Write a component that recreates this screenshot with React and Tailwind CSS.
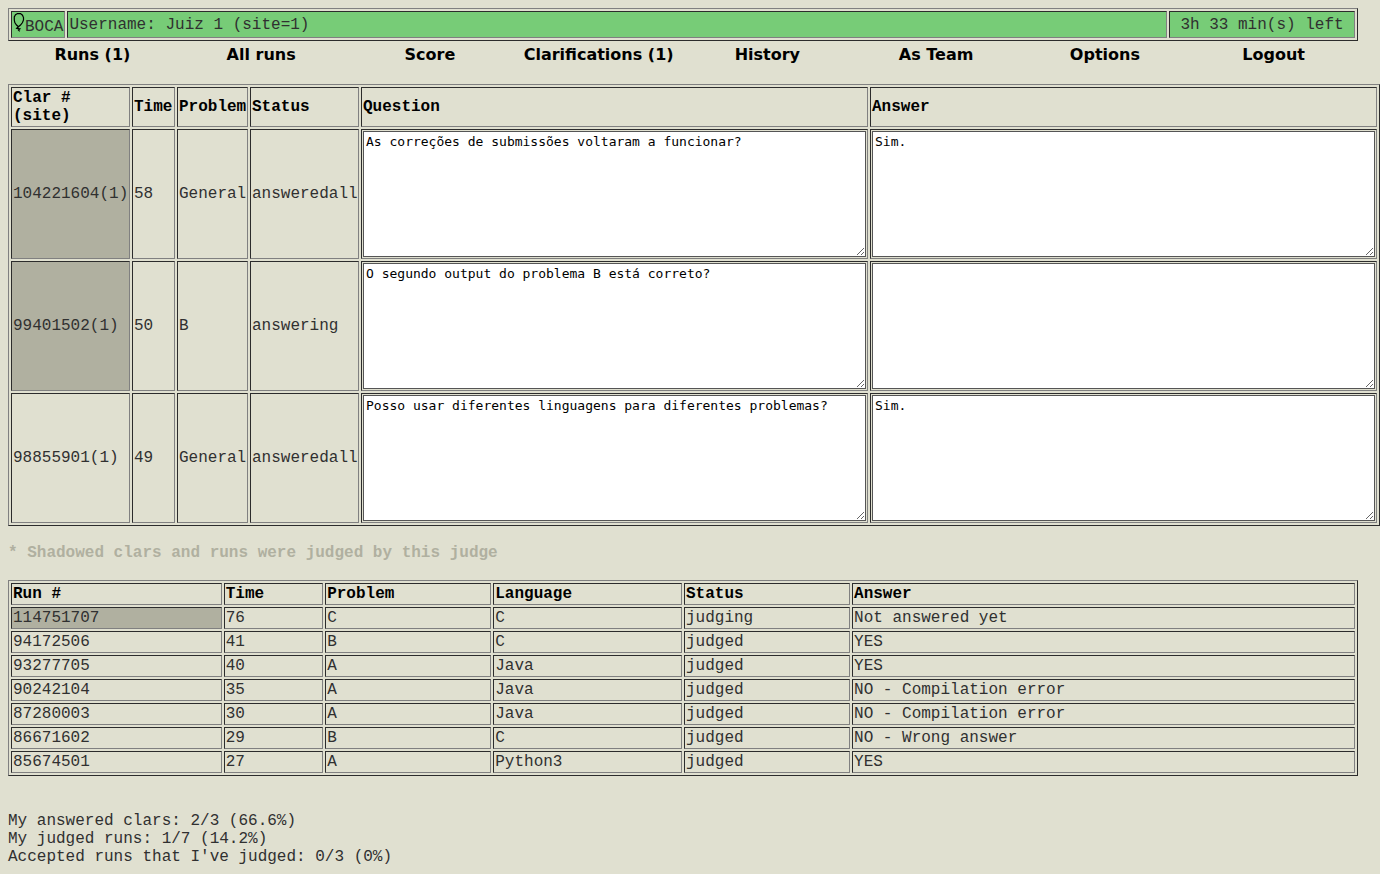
const OUTER =
  "border-separate border-spacing-[2px] border border-t-[#808080] border-l-[#808080] border-r-[#2c2c2c] border-b-[#2c2c2c]";
const CELL =
  "border border-t-[#2c2c2c] border-l-[#2c2c2c] border-r-[#808080] border-b-[#808080] p-px text-left";

const menu = [
  "Runs (1)",
  "All runs",
  "Score",
  "Clarifications (1)",
  "History",
  "As Team",
  "Options",
  "Logout",
];

const clars = [
  { id: "104221604", site: 1, time: 58, problem: "General", status: "answeredall", question: "As correções de submissões voltaram a funcionar?", answer: "Sim.", mine: true },
  { id: "99401502", site: 1, time: 50, problem: "B", status: "answering", question: "O segundo output do problema B está correto?", answer: "", mine: true },
  { id: "98855901", site: 1, time: 49, problem: "General", status: "answeredall", question: "Posso usar diferentes linguagens para diferentes problemas?", answer: "Sim.", mine: false },
];

const runs = [
  { id: "114751707", time: 76, problem: "C", language: "C", status: "judging", answer: "Not answered yet", mine: true },
  { id: "94172506", time: 41, problem: "B", language: "C", status: "judged", answer: "YES" },
  { id: "93277705", time: 40, problem: "A", language: "Java", status: "judged", answer: "YES" },
  { id: "90242104", time: 35, problem: "A", language: "Java", status: "judged", answer: "NO - Compilation error" },
  { id: "87280003", time: 30, problem: "A", language: "Java", status: "judged", answer: "NO - Compilation error" },
  { id: "86671602", time: 29, problem: "B", language: "C", status: "judged", answer: "NO - Wrong answer" },
  { id: "85674501", time: 27, problem: "A", language: "Python3", status: "judged", answer: "YES" },
];

function Balloon() {
  return (
    <svg width="12" height="19" viewBox="0 0 12 19" fill="none" stroke="#000" aria-hidden="true" className="shrink-0 self-start">
      <path
        d="M4.500 .6H7.500L9.500 2.200L10.500 4.500V7L9.500 9.500L7.500 12L5.500 13.800L3.500 12L1.800 9.500L1.300 7V4L2.500 1.800Z"
        strokeWidth="1.200"
      />
      <path d="M5.500 13.500L3.800 15.300L6.800 15.800L5.500 17L6.800 18.200" strokeWidth="1.300" />
    </svg>
  );
}

function Header() {
  return (
    <table className={`${OUTER} w-full`}>
      <tbody>
        <tr className="h-[27px] bg-[#77cc77]">
          <td className={`${CELL} w-[54px]`}>
            <div className="flex h-[23px] items-end whitespace-nowrap">
              <Balloon />
              <span>BOCA</span>
            </div>
          </td>
          <td className={CELL}>Username: Juiz 1 (site=1)</td>
          <td className={`${CELL} w-[186px] whitespace-nowrap`}>
            <div className="text-center">3h 33 min(s) left</div>
          </td>
        </tr>
      </tbody>
    </table>
  );
}

function Menu() {
  return (
    <nav className="grid grid-cols-8 pt-1 pb-5 text-center font-['DejaVu_Sans',Verdana,sans-serif] text-base leading-[19px] font-bold text-black">
      {menu.map((item) => (
        <a key={item} href="#" className="whitespace-nowrap">
          {item}
        </a>
      ))}
    </nav>
  );
}

function Area({ label, value }) {
  return (
    <textarea
      aria-label={label}
      defaultValue={value}
      className="block h-[126px] w-full resize border border-[#555555] bg-white p-0.5 font-['DejaVu_Sans_Mono',monospace] text-[13px] leading-4 text-black"
    />
  );
}

function Clarifications() {
  return (
    <table className={`${OUTER} w-full table-fixed`}>
      <thead className="text-black">
        <tr>
          <th className={`${CELL} w-[119px]`}>
            Clar #<br />
            (site)
          </th>
          <th className={`${CELL} w-[43px]`}>Time</th>
          <th className={`${CELL} w-[71px]`}>Problem</th>
          <th className={`${CELL} w-[109px]`}>Status</th>
          <th className={CELL}>Question</th>
          <th className={CELL}>Answer</th>
        </tr>
      </thead>
      <tbody>
        {clars.map((c) => (
          <tr key={c.id} className="whitespace-nowrap">
            <td className={`${CELL} ${c.mine ? "bg-[#b0b0a0]" : ""}`}>
              <a href="#">
                {c.id}({c.site})
              </a>
            </td>
            <td className={CELL}>{c.time}</td>
            <td className={CELL}>{c.problem}</td>
            <td className={CELL}>{c.status}</td>
            <td className={CELL}>
              <Area label={`Question ${c.id}`} value={c.question} />
            </td>
            <td className={CELL}>
              <Area label={`Answer ${c.id}`} value={c.answer} />
            </td>
          </tr>
        ))}
      </tbody>
    </table>
  );
}

function Runs() {
  return (
    <table className={`${OUTER} w-full table-fixed`}>
      <thead className="text-black">
        <tr>
          <th className={`${CELL} w-[15.8%]`}>Run #</th>
          <th className={`${CELL} w-[7.45%]`}>Time</th>
          <th className={`${CELL} w-[12.45%]`}>Problem</th>
          <th className={`${CELL} w-[14.15%]`}>Language</th>
          <th className={`${CELL} w-[12.45%]`}>Status</th>
          <th className={CELL}>Answer</th>
        </tr>
      </thead>
      <tbody>
        {runs.map((r) => (
          <tr key={r.id}>
            <td className={`${CELL} ${r.mine ? "bg-[#b0b0a0]" : ""}`}>
              <a href="#">{r.id}</a>
            </td>
            <td className={CELL}>{r.time}</td>
            <td className={CELL}>{r.problem}</td>
            <td className={CELL}>{r.language}</td>
            <td className={CELL}>{r.status}</td>
            <td className={CELL}>{r.answer}</td>
          </tr>
        ))}
      </tbody>
    </table>
  );
}

export default function App() {
  return (
    <main className="min-h-screen bg-[#e0e0d0] pt-2 pl-2 font-['Liberation_Mono','Courier_New',monospace] text-base leading-[18px] text-[#303030]">
      <header className="pr-[22px]">
        <Header />
        <Menu />
      </header>
      <Clarifications />
      <p className="my-[18px] font-bold text-[#b0b0a0]">* Shadowed clars and runs were judged by this judge</p>
      <div className="pr-[22px]">
        <Runs />
      </div>
      <div className="pt-9">
        <p>My answered clars: 2/3 (66.6%)</p>
        <p>My judged runs: 1/7 (14.2%)</p>
        <p>Accepted runs that I've judged: 0/3 (0%)</p>
      </div>
    </main>
  );
}
